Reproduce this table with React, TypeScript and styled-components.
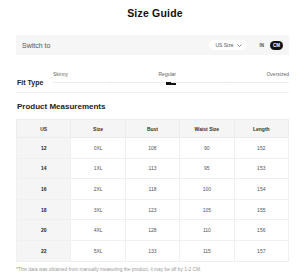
import styled, { createGlobalStyle } from 'styled-components';

const GlobalStyle = createGlobalStyle`
  body {
    margin: 0;
    background: #fff;
    font-family: "Liberation Sans", Arial, sans-serif;
    color: #222;
  }
`;

const columns = ['US', 'Size', 'Bust', 'Waist Size', 'Length'];

const rows = [
  ['12', '0XL', '108', '90', '152'],
  ['14', '1XL', '113', '95', '153'],
  ['16', '2XL', '118', '100', '154'],
  ['18', '3XL', '123', '105', '155'],
  ['20', '4XL', '128', '110', '156'],
  ['22', '5XL', '133', '115', '157'],
];

export default function App() {
  return (
    <>
      <GlobalStyle />
      <Wrapper>
        <Title>Size Guide</Title>

        <SwitchBar>
          <SwitchLabel>Switch to</SwitchLabel>
          <SizeSelect>
            US Size
            <svg width="5" height="3" viewBox="0 0 10 6" fill="none">
              <path d="M1 1l4 4 4-4" stroke="#666" strokeWidth="1.4" />
            </svg>
          </SizeSelect>
          <UnitToggle>
            <Unit>IN</Unit>
            <Unit $active>CM</Unit>
          </UnitToggle>
        </SwitchBar>

        <FitRow>
          <FitLabel>Fit Type</FitLabel>
          <Slider>
            <SliderLabels>
              <span>Skinny</span>
              <span>Regular</span>
              <span>Oversized</span>
            </SliderLabels>
            <Track>
              <Segment />
              <Segment>
                <Thumb />
              </Segment>
              <Segment />
              <Segment />
            </Track>
          </Slider>
        </FitRow>

        <SectionTitle>Product Measurements</SectionTitle>

        <Table>
          <thead>
            <tr>
              {columns.map((c) => (
                <HeadCell key={c}>{c}</HeadCell>
              ))}
            </tr>
          </thead>
          <tbody>
            {rows.map((r) => (
              <tr key={r[0]}>
                {r.map((v, i) => (
                  <Cell key={i} $first={i === 0}>
                    {v}
                  </Cell>
                ))}
              </tr>
            ))}
          </tbody>
        </Table>

        <Note>*This data was obtained from manually measuring the product, it may be off by 1-2 CM.</Note>
      </Wrapper>
    </>
  );
}

const Wrapper = styled.div`
  width: 273px;
  margin-left: 16px;
  padding-top: 6px;
`;

const Title = styled.h1`
  margin: 0;
  height: 14px;
  line-height: 14px;
  text-align: center;
  font-size: 10.5px;
  font-weight: 700;
  letter-spacing: 0.2px;
  color: #111;
  padding-left: 5px;
`;

const SwitchBar = styled.div`
  margin-top: 15px;
  height: 20px;
  background: #f6f6f6;
  display: flex;
  align-items: center;
  padding: 0 6px;
`;

const SwitchLabel = styled.span`
  flex: 1;
  font-size: 7px;
  color: #555;
`;

const SizeSelect = styled.span`
  display: flex;
  align-items: center;
  gap: 3px;
  height: 10px;
  padding: 0 5px 0 6px;
  border-radius: 5px;
  background: #fff;
  font-size: 5px;
  color: #555;
`;

const UnitToggle = styled.div`
  display: flex;
  align-items: center;
  gap: 3px;
  margin-left: 10px;
`;

const Unit = styled.span<{ $active?: boolean }>`
  height: 9px;
  line-height: 9px;
  padding: 0 3px;
  border-radius: 5px;
  font-size: 4.5px;
  font-weight: 700;
  background: ${(p) => (p.$active ? '#111' : 'transparent')};
  color: ${(p) => (p.$active ? '#fff' : '#555')};
`;

const FitRow = styled.div`
  display: flex;
  align-items: flex-end;
  margin-top: 16px;
  padding-bottom: 9px;
  border-bottom: 1px solid #f0f0f0;
`;

const FitLabel = styled.span`
  width: 36px;
  padding-left: 1px;
  font-size: 7px;
  font-weight: 700;
  color: #222;
  line-height: 9px;
  margin-bottom: -4px;
`;

const Slider = styled.div`
  flex: 1;
`;

const SliderLabels = styled.div`
  display: flex;
  justify-content: space-between;
  font-size: 5px;
  color: #666;
  line-height: 6px;
  margin-bottom: 5px;
`;

const Track = styled.div`
  display: flex;
  height: 1px;
`;

const Segment = styled.div`
  flex: 1;
  position: relative;
  background: #ececec;
  & + & {
    border-left: 1px solid #ddd;
  }
`;

const Thumb = styled.div`
  position: absolute;
  right: -5px;
  top: 0;
  width: 10px;
  height: 2.5px;
  background: #111;
`;

const SectionTitle = styled.h2`
  margin: 9px 0 0;
  padding-left: 1px;
  font-size: 8px;
  line-height: 10px;
  font-weight: 700;
  color: #222;
`;

const Table = styled.table`
  margin-top: 7px;
  width: 100%;
  border-collapse: collapse;
  table-layout: fixed;
  border: 1px solid #f0f0f0;
`;

const HeadCell = styled.th`
  height: 17px;
  padding: 0;
  background: #f5f5f5;
  border: 1px solid #ececec;
  font-size: 5px;
  font-weight: 700;
  color: #333;
  text-align: center;
`;

const Cell = styled.td<{ $first?: boolean }>`
  height: 19.6px;
  padding: 0;
  border: 1px solid #f0f0f0;
  background: ${(p) => (p.$first ? '#f5f5f5' : '#fff')};
  font-size: 5px;
  font-weight: ${(p) => (p.$first ? 700 : 400)};
  color: ${(p) => (p.$first ? '#222' : '#555')};
  text-align: center;
`;

const Note = styled.p`
  margin: 5px 0 0;
  font-size: 4.8px;
  color: #999;
  white-space: nowrap;
`;
